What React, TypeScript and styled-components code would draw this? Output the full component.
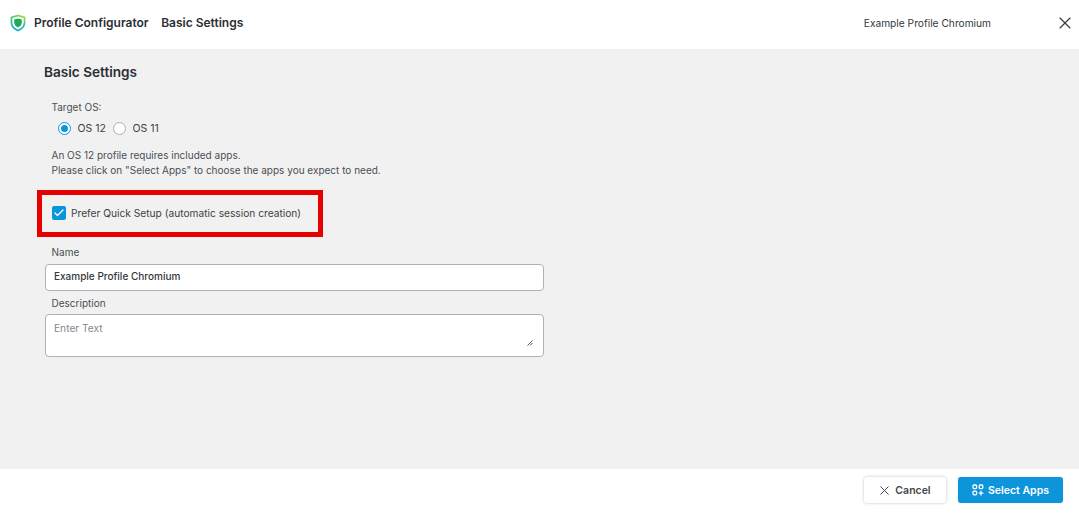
import React from "react";
import styled, { createGlobalStyle } from "styled-components";
import { X, Check } from "lucide-react";

const GlobalStyle = createGlobalStyle`
  html, body {
    margin: 0;
    padding: 0;
    background: #fff;
  }
  body {
    font-family: "Inter", "Liberation Sans", sans-serif;
    color: #2f3336;
  }
`;

const Shield = () => (
  <svg width="16" height="18" viewBox="0 0 16 18">
    <defs>
      <linearGradient id="shieldEdge" x1="0.7" y1="0" x2="0.3" y2="1">
        <stop offset="0" stopColor="#a4da4a" />
        <stop offset="0.5" stopColor="#2fc39a" />
        <stop offset="1" stopColor="#29a9e0" />
      </linearGradient>
    </defs>
    <path
      d="M8 .6 15.4 2.8V8.6C15.4 12.8 12.4 15.9 8 17.4 3.6 15.9.6 12.8.6 8.6V2.8Z"
      fill="url(#shieldEdge)"
    />
    <path
      d="M8 2.4 13.7 4V8.6C13.7 11.9 11.4 14.3 8 15.6 4.6 14.3 2.3 11.9 2.3 8.6V4Z"
      fill="#fff"
    />
    <path
      d="M8 4.4 11.8 5.4V8.6C11.8 10.8 10.3 12.5 8 13.5 5.7 12.5 4.2 10.8 4.2 8.6V5.4Z"
      fill="#1faa59"
    />
  </svg>
);

const AppsAddIcon = () => (
  <svg width="12" height="12" viewBox="0 0 12 12" fill="none" stroke="#fff" strokeWidth="1.3">
    <rect x="1" y="1" width="3.6" height="3.6" rx="1" />
    <rect x="7.2" y="1" width="3.6" height="3.6" rx="1" />
    <rect x="1" y="7.2" width="3.6" height="3.6" rx="1" />
    <path d="M9 6.8V11.4M6.7 9.1H11.3" />
  </svg>
);

const Page = styled.div`
  width: 1079px;
  height: 522px;
  display: flex;
  flex-direction: column;
  overflow: hidden;
`;

const Header = styled.header`
  height: 49px;
  flex: none;
  display: flex;
  align-items: center;
  padding: 0 4.5px 4px 10px;
  box-sizing: border-box;
  background: #fff;
`;

const HeaderTitle = styled.div<{ $gap: number }>`
  font-size: 12px;
  font-weight: 600;
  color: #2b2f33;
  margin-left: ${(p) => p.$gap}px;
`;

const ProfileName = styled.div`
  margin-left: auto;
  margin-right: 63.5px;
  font-size: 10.2px;
  color: #33383c;
`;

const CloseButton = styled.div`
  display: flex;
  color: #3a3f44;
`;

const Content = styled.main`
  flex: 1;
  background: #f1f1f1;
  padding: 16px 0 0 44px;
  position: relative;
`;

const SectionTitle = styled.h2`
  margin: 0 0 21px;
  font-size: 13.6px;
  line-height: 15px;
  font-weight: 600;
  color: #2b2f33;
`;

const FieldLabel = styled.div`
  font-size: 10px;
  line-height: 13px;
  color: #4a4f54;
  margin-left: 7.5px;
`;

const RadioRow = styled.div`
  display: flex;
  align-items: center;
  margin: 6px 0 0 14px;
  height: 16px;
`;

const RadioOption = styled.div`
  display: flex;
  align-items: center;
  gap: 6.5px;
  margin-right: 7px;
  font-size: 10.5px;
  color: #3c4146;
`;

const RadioCircle = styled.span<{ $on?: boolean }>`
  width: 13px;
  height: 13px;
  box-sizing: border-box;
  border-radius: 50%;
  background: #fff;
  border: 1px solid ${(p) => (p.$on ? "#0d95dc" : "#a9b0b5")};
  display: flex;
  align-items: center;
  justify-content: center;

  &::after {
    content: "";
    display: ${(p) => (p.$on ? "block" : "none")};
    width: 7px;
    height: 7px;
    border-radius: 50%;
    background: #0d95dc;
  }
`;

const Note = styled.p`
  margin: 12px 0 0 7.5px;
  font-size: 10px;
  line-height: 15px;
  color: #4a4f54;
`;

const CheckRow = styled.div`
  display: flex;
  align-items: center;
  gap: 5.5px;
  margin: 28px 0 0 7.5px;
  height: 14px;
  font-size: 10.2px;
  color: #3c4146;
`;

const CheckBox = styled.span`
  width: 14px;
  height: 14px;
  border-radius: 2px;
  background: #0d95dc;
  color: #fff;
  display: flex;
  align-items: center;
  justify-content: center;
`;

const Highlight = styled.div`
  position: absolute;
  left: 37px;
  top: 141px;
  width: 286px;
  height: 47px;
  box-sizing: border-box;
  border: 5px solid #e60000;
`;

const NameLabel = styled(FieldLabel)`
  margin-top: 26px;
`;

const DescLabel = styled(FieldLabel)`
  margin-top: 6px;
`;

const NameInput = styled.div`
  width: 499px;
  height: 27px;
  box-sizing: border-box;
  margin: 5px 0 0 1px;
  padding: 0 8px 4px;
  display: flex;
  align-items: center;
  background: #fff;
  border: 1px solid #a9b4ba;
  border-radius: 4px;
  font-size: 10px;
  font-weight: 500;
  color: #33383c;
`;

const TextArea = styled.div`
  width: 499px;
  height: 43px;
  box-sizing: border-box;
  margin: 4px 0 0 1px;
  padding: 7px 8px;
  background: #fff;
  border: 1px solid #a9b4ba;
  border-radius: 4px;
  font-size: 10.2px;
  line-height: 13px;
  color: #83888c;
  position: relative;
`;

const Grip = styled.svg`
  position: absolute;
  right: 10px;
  bottom: 10px;
`;

const Footer = styled.footer`
  height: 53px;
  flex: none;
  display: flex;
  justify-content: flex-end;
  align-items: flex-start;
  gap: 12px;
  padding: 8px 16px 0 0;
  box-sizing: border-box;
  background: #fff;
`;

const Button = styled.div<{ $primary?: boolean }>`
  height: 26px;
  box-sizing: border-box;
  display: flex;
  align-items: center;
  justify-content: center;
  gap: ${(p) => (p.$primary ? "4px" : "3px")};
  padding-right: ${(p) => (p.$primary ? "0" : "2px")};
  border-radius: 3px;
  font-size: 10.5px;
  font-weight: 600;
  width: ${(p) => (p.$primary ? "105px" : "82px")};
  background: ${(p) => (p.$primary ? "#0d95dc" : "#fff")};
  color: ${(p) => (p.$primary ? "#fff" : "#43484c")};
  box-shadow: ${(p) =>
    p.$primary ? "0 0 2px rgba(0,0,0,.15)" : "0 0 3px rgba(0,0,0,.25)"};
`;

export default function App() {
  return (
    <>
      <GlobalStyle />
      <Page>
        <Header>
          <Shield />
          <HeaderTitle $gap={8}>Profile Configurator</HeaderTitle>
          <HeaderTitle $gap={12.5}>Basic Settings</HeaderTitle>
          <ProfileName>Example Profile Chromium</ProfileName>
          <CloseButton>
            <X size={20} strokeWidth={1.4} />
          </CloseButton>
        </Header>
        <Content>
          <SectionTitle>Basic Settings</SectionTitle>
          <FieldLabel>Target OS:</FieldLabel>
          <RadioRow>
            <RadioOption>
              <RadioCircle $on />
              OS 12
            </RadioOption>
            <RadioOption>
              <RadioCircle />
              OS 11
            </RadioOption>
          </RadioRow>
          <Note>
            An OS 12 profile requires included apps.
            <br />
            Please click on "Select Apps" to choose the apps you expect to need.
          </Note>
          <CheckRow>
            <CheckBox>
              <Check size={12} strokeWidth={2.6} />
            </CheckBox>
            Prefer Quick Setup (automatic session creation)
          </CheckRow>
          <Highlight />
          <NameLabel>Name</NameLabel>
          <NameInput>Example Profile Chromium</NameInput>
          <DescLabel>Description</DescLabel>
          <TextArea>
            Enter Text
            <Grip width="6" height="6" viewBox="0 0 6 6">
              <path d="M.5 5.5 5.5.5M3 5.5 5.5 3" stroke="#55595d" strokeWidth="1" />
            </Grip>
          </TextArea>
        </Content>
        <Footer>
          <Button>
            <X size={15} strokeWidth={1.6} />
            Cancel
          </Button>
          <Button $primary>
            <AppsAddIcon />
            Select Apps
          </Button>
        </Footer>
      </Page>
    </>
  );
}
